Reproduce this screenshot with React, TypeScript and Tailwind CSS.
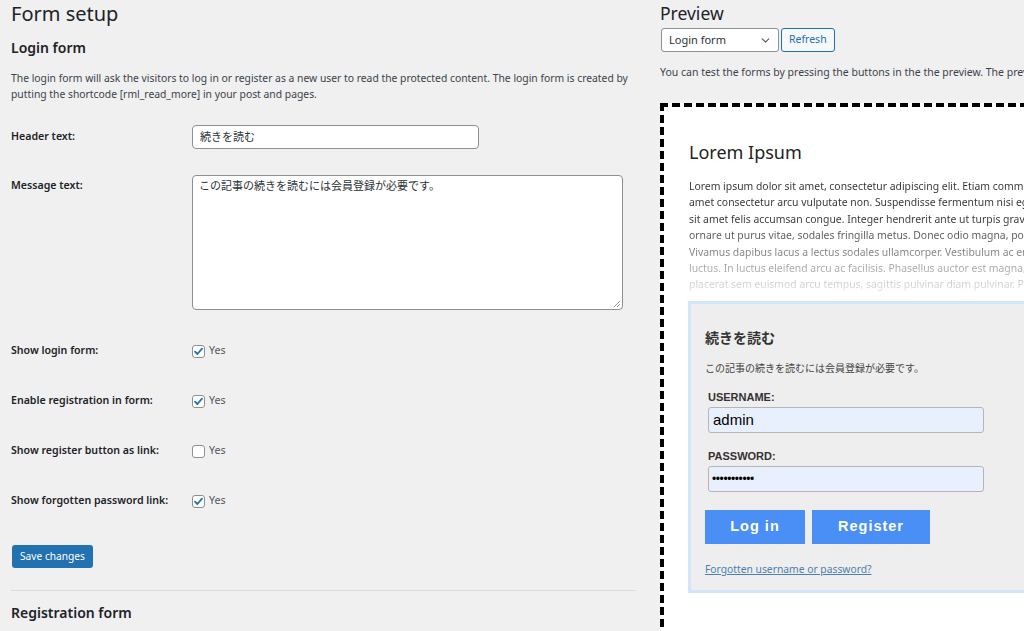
import { ChevronDown } from "lucide-react";

const ui = "font-['Noto_Sans','Noto_Sans_CJK_JP',sans-serif]";
const arial = "font-['Liberation_Sans','Noto_Sans_CJK_JP',sans-serif]";

const lorem = [
  "Lorem ipsum dolor sit amet, consectetur adipiscing elit. Etiam commodo lorem sit",
  "amet consectetur arcu vulputate non. Suspendisse fermentum nisi eget dolor",
  "sit amet felis accumsan congue. Integer hendrerit ante ut turpis gravida,",
  "ornare ut purus vitae, sodales fringilla metus. Donec odio magna, porta",
  "Vivamus dapibus lacus a lectus sodales ullamcorper. Vestibulum ac enim",
  "luctus. In luctus eleifend arcu ac facilisis. Phasellus auctor est magna, a",
  "placerat sem euismod arcu tempus, sagittis pulvinar diam pulvinar. Praesent",
];

export default function App() {
  return (
    <div className={`${ui} w-[1024px] h-[631px] overflow-hidden bg-[#f0f0f1] text-[#1d2327] flex`}>
      {/* Settings column */}
      <div className="ml-[11px] w-[625px] shrink-0 pt-[2px]">
        <h1 className="text-[20px] leading-[24px] font-normal">Form setup</h1>
        <h2 className="mt-[12px] text-[14px] leading-[20px] font-semibold">Login form</h2>
        <p className="mt-[12px] text-[10.35px] leading-[16px] text-[#3c434a]">
          The login form will ask the visitors to log in or register as a new user to read the protected content. The login form is created by
          putting the shortcode [rml_read_more] in your post and pages.
        </p>

        <div className="mt-[23px] flex items-center">
          <Label>Header text:</Label>
          <div className="w-[287px] h-[24px] bg-white border border-[#8c8f94] rounded-[4px] px-[7px] flex items-center text-[11px] text-[#2c3338]">
            続きを読む
          </div>
        </div>

        <div className="mt-[26px] flex items-start">
          <div className="pt-[3px]">
            <Label>Message text:</Label>
          </div>
          <div className="relative w-[431px] h-[135px] bg-white border border-[#8c8f94] rounded-[4px] px-[6px] py-[2px] text-[11px] leading-[16px] text-[#2c3338]">
            この記事の続きを読むには会員登録が必要です。
            <svg className="absolute right-[1px] bottom-[1px]" width="8" height="8" viewBox="0 0 8 8">
              <path d="M7 1 L1 7 M7 4 L4 7" stroke="#9a9a9a" strokeWidth="1" />
            </svg>
          </div>
        </div>

        <div className="mt-[16px]">
          <CheckRow label="Show login form:" checked />
          <CheckRow label="Enable registration in form:" checked />
          <CheckRow label="Show register button as link:" checked={false} />
          <CheckRow label="Show forgotten password link:" checked />
        </div>

        <button className="mt-[19px] ml-[1px] h-[23px] px-[8px] bg-[#2271b1] rounded-[3px] text-white text-[10.2px]">
          Save changes
        </button>

        <div className="mt-[22px] border-t border-[#dcdcde]" />
        <h2 className="mt-[12px] text-[14px] leading-[20px] font-semibold">Registration form</h2>
      </div>

      {/* Preview column */}
      <div className="ml-[24px] w-[420px] shrink-0 pt-[2px]">
        <h2 className="text-[17.5px] leading-[22px] font-normal">Preview</h2>
        <div className="mt-[4px] ml-[1px] flex gap-[2px]">
          <div className="w-[118px] h-[24px] bg-white border border-[#8c8f94] rounded-[3px] pl-[7px] pr-[6px] flex items-center justify-between text-[11px] text-[#2c3338]">
            Login form
            <ChevronDown size={13} strokeWidth={2} className="text-[#50575e]" />
          </div>
          <button className="h-[24px] px-[7px] bg-[#f6f7f7] border border-[#2271b1] rounded-[3px] text-[10.5px] text-[#2271b1]">
            Refresh
          </button>
        </div>
        <p className="mt-[12px] text-[10.5px] leading-[16px] text-[#3c434a] whitespace-nowrap">
          You can test the forms by pressing the buttons in the the preview. The preview is updated when you save.
        </p>

        <div className="mt-[23px] w-[440px] h-[560px] bg-white border-[4px] border-dashed border-black pt-[34px] pl-[25px]">
          <h3 className="text-[18px] leading-[22px] text-[#222]">Lorem Ipsum</h3>
          <p className="mt-[15px] text-[10.4px] leading-[16.4px] whitespace-nowrap bg-linear-to-b from-[#333] from-35% to-[#e6e6e6] bg-clip-text text-transparent">
            {lorem.map((l) => (
              <span key={l} className="block">{l}</span>
            ))}
          </p>

          <div className="mt-[8px] -ml-[1px] w-[420px] h-[292px] bg-[#eeeeee] border-[3px] border-[#d3e5f8] pt-[24px] pl-[14px]">
            <div className="text-[14px] leading-[20px] font-bold text-[#333]">続きを読む</div>
            <div className="mt-[13px] text-[10px] leading-[14px] text-[#444]">この記事の続きを読むには会員登録が必要です。</div>

            <div className={`${arial} ml-[3px]`}>
              <div className="mt-[16px] text-[11px] leading-[13px] font-bold text-[#333]">USERNAME:</div>
              <div className="mt-[3px] w-[276px] h-[26px] bg-[#e8f0fe] border border-[#b5b5b5] rounded-[3px] px-[4px] flex items-center text-[15px] text-black">
                admin
              </div>
              <div className="mt-[17px] text-[11px] leading-[13px] font-bold text-[#333]">PASSWORD:</div>
              <div className="mt-[3px] w-[276px] h-[26px] bg-[#e8f0fe] border border-[#b5b5b5] rounded-[3px] px-[3px] flex items-center text-[12px] tracking-[-0.4px] text-black">
                •••••••••••
              </div>
            </div>

            <div className={`${arial} mt-[18px] flex gap-[7px]`}>
              <button className="w-[100px] h-[34px] bg-[#4a8ff5] text-white text-[14.5px] font-bold tracking-[1px]">Log in</button>
              <button className="w-[118px] h-[34px] bg-[#4a8ff5] text-white text-[14.5px] font-bold tracking-[1px]">Register</button>
            </div>

            <a className="mt-[18px] block text-[10.3px] leading-[14px] text-[#4a7fae] underline">Forgotten username or password?</a>
          </div>
        </div>
      </div>
    </div>
  );
}

function Label({ children }: { children: React.ReactNode }) {
  return <div className="w-[181px] shrink-0 text-[10.6px] font-semibold text-[#1d2327]">{children}</div>;
}

function CheckRow({ label, checked }: { label: string; checked: boolean }) {
  return (
    <div className="h-[50px] flex items-center">
      <Label>{label}</Label>
      <div className="w-[13px] h-[13px] bg-white border border-[#8c8f94] rounded-[3px] flex items-center justify-center">
        {checked && (
          <svg width="11" height="11" viewBox="0 0 11 11">
            <path d="M2 5.6 L4.4 8 L9 2.6" fill="none" stroke="#2271b1" strokeWidth="1.8" strokeLinecap="round" strokeLinejoin="round" />
          </svg>
        )}
      </div>
      <span className="ml-[4px] text-[10.6px] text-[#50575e]">Yes</span>
    </div>
  );
}
